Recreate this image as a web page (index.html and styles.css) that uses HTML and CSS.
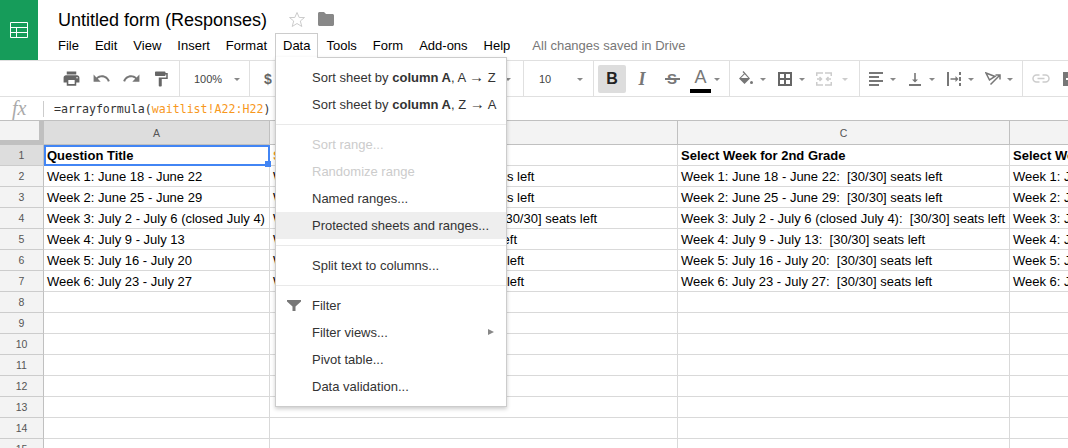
FILE: index.html
```html
<!DOCTYPE html>
<html lang="en">
<head>
    <meta charset="UTF-8">
    <meta name="viewport" content="width=device-width, initial-scale=1.0">
    <title>Untitled form (Responses)</title>
    <link rel="stylesheet" href="styles.css">
</head>
<body>
    <header class="topbar">
        <div class="logo">
            <svg width="20" height="18" viewBox="0 0 20 18" fill="none" stroke="#fff" stroke-width="1">
                <path d="M1.5 1.5h17v15h-17z M1.5 6.5h17 M1.5 11.5h17 M7.5 6.5v10"/>
            </svg>
        </div>
        <div class="docinfo">
            <div class="titlerow">
                <span class="doctitle">Untitled form (Responses)</span>
                <svg class="star" width="18" height="17" viewBox="0 0 18 17" fill="none" stroke="#ccc" stroke-width="1">
                    <path d="M9 1.5l2.2 5h5.3l-4.2 3.5 1.5 5.5L9 12.5l-4.8 3 1.5-5.5L1.5 6.5h5.3z"/>
                </svg>
                <svg class="folder" width="16" height="14" viewBox="0 0 16 14" fill="#888">
                    <path d="M0 1.5C0 .7.7 0 1.5 0H6l2 2h6.5c.8 0 1.5.7 1.5 1.500v9c0 .8-.7 1.5-1.5 1.5h-13C.7 14 0 13.3 0 12.5z"/>
                </svg>
            </div>
            <nav class="menubar">
                <span class="menuitem">File</span>
                <span class="menuitem">Edit</span>
                <span class="menuitem">View</span>
                <span class="menuitem">Insert</span>
                <span class="menuitem">Format</span>
                <div class="menuitem open">Data
                    <ul class="dropdown">
                        <li>Sort sheet by <b>column A</b>, A <span class="arr">→</span> Z</li>
                        <li>Sort sheet by <b>column A</b>, Z <span class="arr">→</span> A</li>
                        <li class="sep"></li>
                        <li class="off">Sort range...</li>
                        <li class="off">Randomize range</li>
                        <li>Named ranges...</li>
                        <li class="hover">Protected sheets and ranges...</li>
                        <li class="sep"></li>
                        <li>Split text to columns...</li>
                        <li class="sep"></li>
                        <li>
                            <svg class="filter-icon" width="14" height="11" viewBox="0 0 14 11" fill="#777"><path d="M0 0h14v1.5L8.500 6.5V11h-3V6.500L0 1.5z"/></svg>
                            Filter
                        </li>
                        <li>Filter views...<span class="sub-arrow"></span></li>
                        <li>Pivot table...</li>
                        <li>Data validation...</li>
                    </ul>
                </div>
                <span class="menuitem">Tools</span>
                <span class="menuitem">Form</span>
                <span class="menuitem">Add-ons</span>
                <span class="menuitem">Help</span>
                <span class="saved">All changes saved in Drive</span>
            </nav>
        </div>
    </header>

    <div class="toolbar">
        <div class="group g-history">
            <span class="btn"><svg width="19" height="19" viewBox="0 0 24 24" fill="#666"><path d="M19 8H5c-1.66 0-3 1.34-3 3v6h4v4h12v-4h4v-6c0-1.66-1.34-3-3-3zm-3 11H8v-5h8v5zm3-7c-.55 0-1-.45-1-1s.45-1 1-1 1 .45 1 1-.45 1-1 1zm-1-9H6v4h12V3z"/></svg></span>
            <span class="btn"><svg width="19" height="19" viewBox="0 0 24 24" fill="#777"><path d="M12.5 8c-2.65 0-5.05.99-6.9 2.6L2 7v9h9l-3.62-3.62c1.39-1.16 3.16-1.88 5.12-1.88 3.54 0 6.55 2.31 7.6 5.5l2.37-.78C21.08 11.03 17.15 8 12.5 8z"/></svg></span>
            <span class="btn"><svg width="19" height="19" viewBox="0 0 24 24" fill="#777"><path d="M18.4 10.6C16.55 8.99 14.15 8 11.5 8c-4.65 0-8.58 3.03-9.96 7.22L3.9 16c1.05-3.19 4.05-5.5 7.6-5.5 1.95 0 3.73.72 5.12 1.88L13 16h9V7l-3.6 3.6z"/></svg></span>
            <span class="btn"><svg width="18" height="18" viewBox="0 0 24 24" fill="#666"><path d="M18 4V3c0-.55-.45-1-1-1H5c-.55 0-1 .45-1 1v4c0 .55.45 1 1 1h12c.55 0 1-.45 1-1V6h1v4H9v11c0 .55.45 1 1 1h2c.55 0 1-.45 1-1v-9h8V4h-3z"/></svg></span>
        </div>
        <div class="group g-zoom">
            <span class="tb-text">100%</span>
            <span class="caret"></span>
        </div>
        <div class="group g-number">
            <span class="btn-sm dollar">$</span>
            <span class="btn-sm">%</span>
            <span class="btn-sm">.0</span>
            <span class="btn-sm">.00</span>
            <span class="btn-sm">123</span>
            <span class="tb-text font-name">Arial</span>
            <span class="caret"></span>
        </div>
        <div class="group g-size">
            <span class="tb-text">10</span>
            <span class="caret"></span>
        </div>
        <div class="group g-text">
            <span class="fmt fmt-bold">B</span>
            <span class="fmt fmt-italic">I</span>
            <span class="fmt fmt-strike">S</span>
            <span class="fmt fmt-color">A</span>
            <span class="caret"></span>
        </div>
        <div class="group g-cell">
            <span class="ico"><svg width="16" height="16" viewBox="0 0 16 16" fill="#777"><path d="M5.5 0L4.5 1 6 2.5 1 7.500 6.500 13 12 7.500zM6.700 3.300L10.200 7H3z"/><path d="M2.500 7.500h8L6.500 11.500z"/><circle cx="13.500" cy="11.500" r="1.500"/></svg></span>
            <span class="caret"></span>
            <span class="ico"><svg width="14" height="14" viewBox="0 0 14 14" fill="none" stroke="#666" stroke-width="2"><path d="M1 1h12v12H1z M7 1v12 M1 7h12"/></svg></span>
            <span class="caret"></span>
            <span class="ico"><svg width="16" height="14" viewBox="0 0 16 14" fill="none" stroke="#ccc" stroke-width="1.5"><path d="M0 1h7 M9 1h7 M0 13h7 M9 13h7 M.75 1v3 M15.25 1v3 M.75 10v3 M15.25 10v3 M1 7h4 M3.5 5l2 2-2 2 M15 7h-4 M12.5 5l-2 2 2 2"/></svg></span>
            <span class="caret caret-off"></span>
        </div>
        <div class="group g-align">
            <span class="ico"><svg width="14" height="14" viewBox="0 0 14 14" fill="#777"><path d="M0 0h14v2H0z M0 4h10v2H0z M0 8h14v2H0z M0 12h10v2H0z"/></svg></span>
            <span class="caret"></span>
            <span class="ico"><svg width="12" height="14" viewBox="0 0 12 14" fill="#777"><path d="M0 12h12v2H0z M5.2 1h1.6v6.5H9l-3 3-3-3h2.200z"/></svg></span>
            <span class="caret"></span>
            <span class="ico"><svg width="14" height="14" viewBox="0 0 14 14" fill="#777"><path d="M0 0h2v14H0z M12 0h2v3h-2z M12 5h2v4h-2z M12 11h2v3h-2z M3.500 6.200h5V4l3 3-3 3V7.800h-5z"/></svg></span>
            <span class="caret"></span>
            <span class="ico"><svg width="16" height="14" viewBox="0 0 16 14" fill="none" stroke="#777" stroke-width="1.5"><path d="M1 1l9 3.500-5.500 3.500z M5.500 12.500L14.500 3.500 M10.500 3h4.500v4.500"/></svg></span>
            <span class="caret"></span>
        </div>
        <div class="group g-insert">
            <svg width="18" height="9" viewBox="0 0 18 9" fill="none" stroke="#ccc" stroke-width="1.5"><path d="M7.500 1H4.500a3.500 3.500 0 0 0 0 7h3 M10.500 1h3a3.500 3.500 0 0 1 0 7h-3 M5.500 4.500h7"/></svg>
            <svg class="comment" width="14" height="14" viewBox="0 0 14 14" fill="#777"><path d="M0 0h14v14H0z"/><path d="M6 3h2v3h3v2H8v3H6V8H3V6h3z" fill="#fff"/></svg>
        </div>
    </div>

    <div class="formulabar">
        <span class="fx">fx</span>
        <span class="fx-sep"></span>
        <span class="formula">=arrayformula(<span class="range">waitlist!A22:H22</span>)</span>
    </div>

    <table class="sheet">
        <colgroup>
            <col class="c-row"><col class="c-a"><col class="c-b"><col class="c-c"><col class="c-d">
        </colgroup>
        <thead>
            <tr>
                <th class="corner"></th>
                <th class="picked">A</th><th>B</th><th>C</th><th>D</th>
            </tr>
        </thead>
        <tbody>
            <tr>
                <th class="picked">1</th>
                <td class="active"><b>Question Title</b></td>
                <td class="in-range"><b>Select Week for 1st Grade</b></td>
                <td><b>Select Week for 2nd Grade</b></td>
                <td><b>Select Week for 3rd Grade</b></td>
            </tr>
            <tr>
                <th>2</th>
                <td>Week 1: June 18 - June 22</td>
                <td>Week 1: June 18 - June 22:  [30/30] seats left</td>
                <td>Week 1: June 18 - June 22:  [30/30] seats left</td>
                <td>Week 1: June 18 - June 22:  [30/30] seats left</td>
            </tr>
            <tr>
                <th>3</th>
                <td>Week 2: June 25 - June 29</td>
                <td>Week 2: June 25 - June 29:  [30/30] seats left</td>
                <td>Week 2: June 25 - June 29:  [30/30] seats left</td>
                <td>Week 2: June 25 - June 29:  [30/30] seats left</td>
            </tr>
            <tr>
                <th>4</th>
                <td>Week 3: July 2 - July 6 (closed July 4)</td>
                <td>Week 3: July 2 - July 6 (closed July 4):  [30/30] seats left</td>
                <td>Week 3: July 2 - July 6 (closed July 4):  [30/30] seats left</td>
                <td>Week 3: July 2 - July 6 (closed July 4):  [30/30] seats left</td>
            </tr>
            <tr>
                <th>5</th>
                <td>Week 4: July 9 - July 13</td>
                <td>Week 4: July 9 - July 13:  [30/30] seats left</td>
                <td>Week 4: July 9 - July 13:  [30/30] seats left</td>
                <td>Week 4: July 9 - July 13:  [30/30] seats left</td>
            </tr>
            <tr>
                <th>6</th>
                <td>Week 5: July 16 - July 20</td>
                <td>Week 5: July 16 - July 20:  [30/30] seats left</td>
                <td>Week 5: July 16 - July 20:  [30/30] seats left</td>
                <td>Week 5: July 16 - July 20:  [30/30] seats left</td>
            </tr>
            <tr>
                <th>7</th>
                <td>Week 6: July 23 - July 27</td>
                <td>Week 6: July 23 - July 27:  [30/30] seats left</td>
                <td>Week 6: July 23 - July 27:  [30/30] seats left</td>
                <td>Week 6: July 23 - July 27:  [30/30] seats left</td>
            </tr>
            <tr><th>8</th><td></td><td></td><td></td><td></td></tr>
            <tr><th>9</th><td></td><td></td><td></td><td></td></tr>
            <tr><th>10</th><td></td><td></td><td></td><td></td></tr>
            <tr><th>11</th><td></td><td></td><td></td><td></td></tr>
            <tr><th>12</th><td></td><td></td><td></td><td></td></tr>
            <tr><th>13</th><td></td><td></td><td></td><td></td></tr>
            <tr><th>14</th><td></td><td></td><td></td><td></td></tr>
            <tr><th>15</th><td></td><td></td><td></td><td></td></tr>
        </tbody>
    </table>
</body>
</html>
```

FILE: styles.css
```css
* {
    margin: 0;
    padding: 0;
    box-sizing: border-box;
}
html, body {
    height: 448px;
    overflow: hidden;
}
body {
    font-family: "Liberation Sans", Arial, sans-serif;
    font-size: 13px;
    color: #000;
    background: #fff;
}

/* title + menus */
.topbar {
    display: flex;
    height: 60px;
}
.logo {
    display: flex;
    align-items: center;
    justify-content: center;
    width: 38px;
    background: #169c5a;
}
.docinfo {
    flex: 1;
    padding-left: 12px;
}
.titlerow {
    display: flex;
    align-items: center;
    height: 33px;
    padding-left: 8px;
}
.doctitle {
    font-size: 18px;
    margin-top: 7px;
}
.star {
    margin: 5px 0 0 21px;
}
.folder {
    margin: 5px 0 0 12px;
}
.menubar {
    display: flex;
    align-items: center;
    height: 25px;
}
.menuitem {
    display: block;
    height: 25px;
    line-height: 23px;
    padding: 0 7px;
    border: 1px solid transparent;
}
.menuitem.open {
    position: relative;
    border-color: #ccc;
    border-bottom: none;
    background: #fff;
}
.menuitem.open::after {
    content: "";
    position: absolute;
    left: 0;
    right: 0;
    top: 23px;
    height: 1px;
    background: #fff;
    z-index: 3;
}
.saved {
    margin-left: 14px;
    color: #777;
}
.dropdown {
    position: absolute;
    left: -1px;
    top: 23px;
    z-index: 2;
    width: 232px;
    padding: 6px 0;
    list-style: none;
    background: #fff;
    border: 1px solid #ccc;
    box-shadow: 0 2px 4px rgba(0, 0, 0, .2);
    color: #333;
}
.dropdown li {
    position: relative;
    height: 27px;
    line-height: 27px;
    padding-left: 36px;
    white-space: nowrap;
}
.dropdown li.sep {
    height: 1px;
    margin: 6px 0;
    padding: 0;
    background: #e9e9e9;
}
.dropdown li.off {
    color: #ccc;
}
.dropdown li.hover {
    background: #eee;
}
.arr {
    font-size: 15px;
    line-height: 1;
}
.filter-icon {
    position: absolute;
    left: 11px;
    top: 8px;
}
.sub-arrow {
    position: absolute;
    right: 12px;
    top: 10px;
    border-left: 6px solid #888;
    border-top: 3.5px solid transparent;
    border-bottom: 3.5px solid transparent;
}

/* toolbar */
.toolbar {
    display: flex;
    height: 37px;
    border-top: 1px solid #e0e0e0;
    border-bottom: 1px solid #e0e0e0;
    overflow: hidden;
}
.group {
    display: flex;
    flex: none;
    align-items: center;
    height: 100%;
    border-right: 1px solid #e0e0e0;
    color: #555;
}
.g-history { width: 180px; padding-left: 56px; }
.g-zoom { width: 70px; padding-left: 14px; }
.g-number { width: 274px; padding: 0 9px 0 4px; }
.g-size { width: 70px; padding-left: 15px; }
.g-text { width: 136px; padding-left: 4px; gap: 2px; }
.g-cell { width: 130px; padding-left: 5px; }
.g-align { width: 163px; padding-left: 5px; }
.g-insert { width: 60px; padding-left: 9px; border-right: none; }

.btn {
    display: flex;
    align-items: center;
    justify-content: center;
    width: 30px;
    height: 30px;
}
.btn-sm {
    width: 28px;
    text-align: center;
    font-size: 12px;
}
.dollar {
    font-size: 14px;
    font-weight: bold;
    color: #666;
}
.tb-text {
    font-size: 11px;
    color: #444;
}
.font-name {
    flex: 1;
    padding-left: 8px;
}
.caret {
    width: 0;
    height: 0;
    margin: 1px 3px 0;
    border-left: 3px solid transparent;
    border-right: 3px solid transparent;
    border-top: 3px solid #888;
}
.g-zoom .caret { margin-left: 12px; }
.g-size .caret { margin-left: 26px; }
.g-text .caret { margin-left: 1px; }
.g-cell .caret, .g-align .caret { margin-right: 8px; }
.g-cell .caret-off {
    margin-left: 7px;
    border-top-color: #ccc;
}
.fmt {
    position: relative;
    width: 28px;
    height: 28px;
    line-height: 28px;
    text-align: center;
    font-size: 16px;
    font-weight: bold;
    color: #777;
}
.fmt-bold {
    background: #ddd;
    border-radius: 2px;
    color: #222;
}
.fmt-italic {
    font-family: "Liberation Serif", serif;
    font-style: italic;
    font-size: 18px;
}
.fmt-strike {
    font-size: 15px;
}
.fmt-strike::after {
    content: "";
    position: absolute;
    left: 7px;
    right: 6px;
    top: 13px;
    height: 2px;
    background: #777;
}
.fmt-color {
    width: 21px;
    height: 26px;
    margin: 2px 0 0 2px;
    line-height: 21px;
    font-size: 18px;
    font-weight: normal;
    border-bottom: 4px solid #000;
}
.ico {
    display: flex;
    align-items: center;
    justify-content: center;
    width: 22px;
}
.comment {
    margin-left: 13px;
}

/* formula bar */
.formulabar {
    display: flex;
    align-items: center;
    height: 23px;
}
.fx {
    width: 43px;
    padding-left: 12px;
    font-family: "Liberation Serif", serif;
    font-style: italic;
    font-size: 20px;
    color: #aaa;
}
.fx-sep {
    width: 1px;
    height: 16px;
    background: #ccc;
}
.formula {
    margin-left: 10px;
    font-family: "DejaVu Sans Mono", monospace;
    font-size: 11.6px;
    color: #333;
}
.range {
    color: #f7981d;
}

/* grid */
.sheet {
    width: 1342px;
    table-layout: fixed;
    border-collapse: separate;
    border-spacing: 0;
}
.c-row { width: 44px; }
.c-a { width: 226px; }
.c-b { width: 408px; }
.c-c { width: 332px; }
.c-d { width: 332px; }
.sheet th {
    height: 21px;
    font-size: 10.5px;
    font-weight: normal;
    color: #555;
    background: #f3f3f3;
    border-right: 1px solid #c0c0c0;
    border-bottom: 1px solid #ccc;
}
.sheet thead th {
    height: 25px;
    border-top: 1px solid #c0c0c0;
    border-bottom: 1px solid #c0c0c0;
}
.sheet th.picked {
    background: #ddd;
}
.sheet th.corner {
    border-right: 5px solid #c0c0c0;
    border-bottom: 5px solid #c0c0c0;
}
.sheet td {
    height: 21px;
    padding: 0 3px;
    white-space: pre;
    overflow: hidden;
    border-right: 1px solid #d9d9d9;
    border-bottom: 1px solid #d9d9d9;
}
.sheet td.in-range {
    color: #f7981d;
}
.sheet td.active {
    position: relative;
    overflow: visible;
    outline: 2px solid #4285f4;
    outline-offset: -2px;
}
.sheet td.active::after {
    content: "";
    position: absolute;
    right: -2px;
    bottom: -2px;
    width: 6px;
    height: 6px;
    background: #4285f4;
}
```
